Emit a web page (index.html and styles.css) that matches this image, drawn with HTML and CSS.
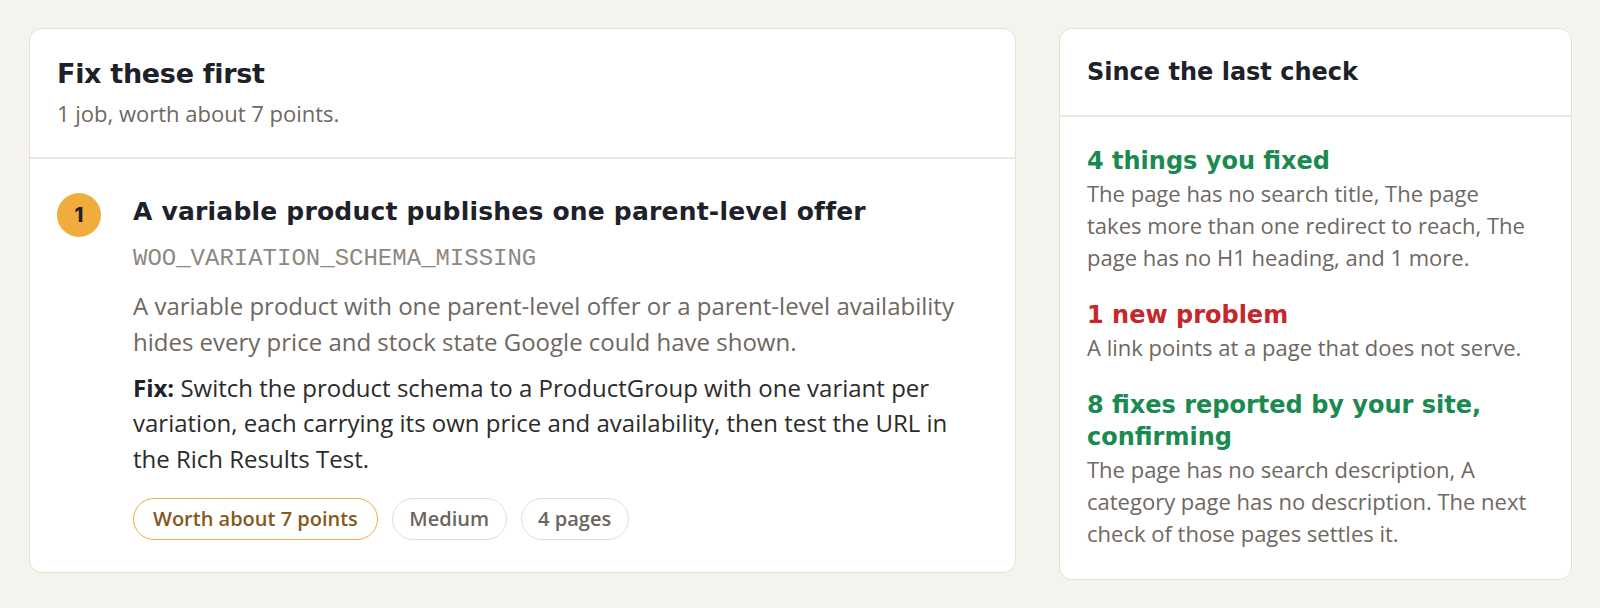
FILE: index.html
```html
<!DOCTYPE html>
<html lang="en">
<head>
<meta charset="utf-8">
<title>Fix these first</title>
<link rel="stylesheet" href="styles.css">
</head>
<body>
<main class="layout">
  <section class="card card-main">
    <header class="card-head main-head">
      <h2 class="title-lg">Fix these first</h2>
      <p class="subtitle">1 job, worth about 7 points.</p>
    </header>
    <div class="main-body">
      <article class="job">
        <div class="job-num">1</div>
        <div class="job-content">
          <h3 class="job-title">A variable product publishes one parent-level offer</h3>
          <div class="job-code">WOO_VARIATION_SCHEMA_MISSING</div>
          <p class="job-desc">A variable product with one parent-level offer or a parent-level availability hides every price and stock state Google could have shown.</p>
          <p class="job-fix"><strong>Fix:</strong> Switch the product schema to a ProductGroup with one variant per variation, each carrying its own price and availability, then test the URL in the Rich Results Test.</p>
          <div class="chips">
            <span class="chip chip-worth">Worth about 7 points</span>
            <span class="chip">Medium</span>
            <span class="chip">4 pages</span>
          </div>
        </div>
      </article>
    </div>
  </section>

  <aside class="card card-side">
    <header class="card-head side-head">
      <h2 class="title-md">Since the last check</h2>
    </header>
    <div class="side-body">
      <div class="change">
        <h4 class="change-title good">4 things you fixed</h4>
        <p class="change-text">The page has no search title, The page takes more than one redirect to reach, The page has no H1 heading, and 1 more.</p>
      </div>
      <div class="change">
        <h4 class="change-title bad">1 new problem</h4>
        <p class="change-text">A link points at a page that does not serve.</p>
      </div>
      <div class="change">
        <h4 class="change-title good">8 fixes reported by your site, confirming</h4>
        <p class="change-text">The page has no search description, A category page has no description. The next check of those pages settles it.</p>
      </div>
    </div>
  </aside>
</main>
</body>
</html>
```

FILE: styles.css
```css
* { box-sizing: border-box; }

html, body {
  margin: 0;
  padding: 0;
  background: #f5f3ed;
}

body {
  font-family: "Open Sans", "Noto Sans", sans-serif;
  color: #2a2a2a;
}

.layout {
  display: grid;
  grid-template-columns: 1fr 513px;
  column-gap: 43px;
  align-items: start;
  padding: 28px 28px 0 29px;
}

.card {
  background: #ffffff;
  border: 1px solid #e6e1d5;
  border-radius: 13px;
}

h2, h3, h4, p { margin: 0; }

.card-head {
  border-bottom: 2px solid #ece7dc;
}

/* ---------- main card ---------- */

.main-head {
  padding: 27px 27px 29px;
}

.title-lg {
  font-family: "DejaVu Sans", "Inter", sans-serif;
  font-weight: 700;
  font-size: 27px;
  line-height: 36px;
  letter-spacing: -0.3px;
  color: #1d2129;
}

.subtitle {
  margin-top: 6px;
  font-size: 22px;
  line-height: 30px;
  color: #6e6861;
}

.main-body {
  padding: 34px 27px 32px;
}

.job {
  display: flex;
  gap: 32px;
  align-items: flex-start;
}

.job-num {
  flex: none;
  width: 44px;
  height: 44px;
  border-radius: 50%;
  background: #f0ac3c;
  color: #1d2129;
  font-family: "Inter", sans-serif;
  font-weight: 800;
  font-size: 20px;
  display: flex;
  align-items: center;
  justify-content: center;
}

.job-content {
  flex: 1;
  min-width: 0;
}

.job-title {
  margin-top: 2px;
  font-family: "DejaVu Sans", "Inter", sans-serif;
  font-weight: 700;
  font-size: 25px;
  line-height: 34px;
  letter-spacing: 0.2px;
  color: #1d2129;
}

.job-code {
  margin-top: 15px;
  font-family: "Liberation Mono", "Courier New", monospace;
  font-size: 24px;
  line-height: 30px;
  color: #8d8882;
}

.job-desc {
  margin-top: 14px;
  font-size: 24px;
  line-height: 35.6px;
  color: #6e6861;
}

.job-fix {
  margin-top: 11px;
  font-size: 24px;
  line-height: 35.2px;
  color: #2b2b2b;
}

.job-fix strong {
  font-weight: 700;
  color: #1d2129;
}

.chips {
  display: flex;
  gap: 14px;
  margin-top: 22px;
}

.chip {
  display: inline-flex;
  align-items: center;
  height: 42px;
  padding: 0 16.5px;
  border: 1.5px solid #e4dfd3;
  border-radius: 21px;
  font-size: 20px;
  font-weight: 600;
  color: #6b6560;
}

.chip-worth {
  padding: 0 19px;
  border-color: #e9ad4d;
  color: #86591a;
}

/* ---------- side card ---------- */

.side-head {
  padding: 27px 27px 27px;
}

.title-md {
  font-family: "DejaVu Sans", "Inter", sans-serif;
  font-weight: 700;
  font-size: 24px;
  line-height: 32px;
  color: #1d2129;
}

.side-body {
  padding: 28px 36px 30px 27px;
  display: flex;
  flex-direction: column;
  gap: 26px;
}

.change-title {
  font-family: "DejaVu Sans", "Inter", sans-serif;
  font-weight: 700;
  font-size: 24px;
  line-height: 32px;
}

.change-title.good { color: #1b8a50; }
.change-title.bad { color: #c4282b; }

.change-text {
  font-size: 22px;
  line-height: 32px;
  color: #6e6861;
}
```
